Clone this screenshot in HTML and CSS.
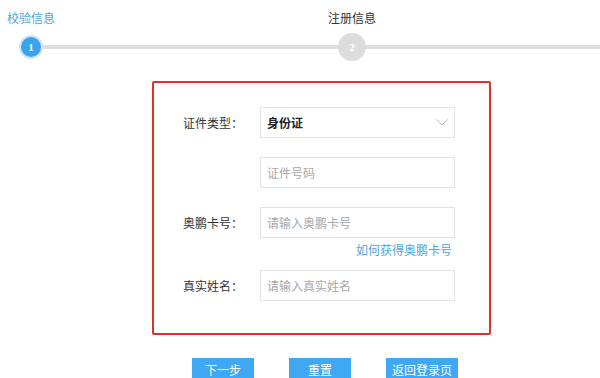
FILE: index.html
```html
<!DOCTYPE html>
<html lang="zh-CN">
<head>
<meta charset="utf-8">
<title>注册</title>
<link rel="stylesheet" href="styles.css">
</head>
<body>
<div class="steps">
  <div class="step active">
    <div class="step-label">校验信息</div>
    <div class="step-dot"><span class="dot">1</span></div>
  </div>
  <div class="step">
    <div class="step-label">注册信息</div>
    <div class="step-dot"><span class="dot">2</span></div>
  </div>
</div>

<div class="panel">
  <div class="row">
    <label class="label">证件类型：</label>
    <div class="field select">
      <span class="value">身份证</span>
      <svg class="chev" width="12" height="7" viewBox="0 0 12 7"><path d="M0.5 0.5 L6 6 L11.5 0.5" fill="none" stroke="#b5b5b5" stroke-width="1"/></svg>
    </div>
  </div>
  <div class="row">
    <span class="label"></span>
    <div class="field"><span class="ph">证件号码</span></div>
  </div>
  <div class="row tight">
    <label class="label">奥鹏卡号：</label>
    <div class="field"><span class="ph">请输入奥鹏卡号</span></div>
  </div>
  <div class="hint"><a class="link">如何获得奥鹏卡号</a></div>
  <div class="row last">
    <label class="label">真实姓名：</label>
    <div class="field"><span class="ph">请输入真实姓名</span></div>
  </div>
</div>

<div class="actions">
  <button class="btn">下一步</button>
  <button class="btn">重置</button>
  <button class="btn wide">返回登录页</button>
</div>
</body>
</html>
```

FILE: styles.css
```css
* { box-sizing: border-box; }
body {
  margin: 0;
  background: #fff;
  font-family: "Noto Sans CJK SC", "Liberation Sans", sans-serif;
  font-size: 12px;
  color: #333;
  width: 600px;
  height: 378px;
  overflow: hidden;
}

.steps {
  position: relative;
  display: flex;
  gap: 259px;
  padding-top: 10px;
  height: 81px;
}
.steps::before {
  content: "";
  position: absolute;
  left: 31px;
  right: 0;
  top: 45px;
  height: 4px;
  background: #dedede;
}
.step {
  position: relative;
  width: 62px;
  display: flex;
  flex-direction: column;
  align-items: center;
}
.step-label {
  line-height: 16px;
  font-size: 12px;
  color: #333;
  white-space: nowrap;
}
.step.active .step-label { color: #4ba6df; }
.step-dot {
  margin-top: 7px;
  height: 28px;
  display: flex;
  align-items: center;
  justify-content: center;
}
.dot {
  width: 28px;
  height: 28px;
  border-radius: 50%;
  background: #dcdcdc;
  color: #fff;
  font-family: "Liberation Serif", serif;
  font-weight: bold;
  font-size: 11px;
  display: flex;
  align-items: center;
  justify-content: center;
}
.step.active .dot {
  width: 24px;
  height: 24px;
  background: #3aa3ee;
  border: 2px solid #d3e5f4;
}

.panel {
  margin-left: 152px;
  width: 339px;
  height: 254px;
  border: 2px solid #df3029;
  border-radius: 2px;
  padding: 24px 34px 0 29px;
}
.row {
  display: flex;
  align-items: center;
  height: 31px;
  margin-bottom: 19px;
}
.row.tight { margin-bottom: 0; }
.label {
  width: 77px;
  flex: none;
  color: #333;
  font-size: 12px;
}
.field {
  width: 195px;
  height: 31px;
  border: 1px solid #e3e3e3;
  display: flex;
  align-items: center;
  padding-left: 6px;
  padding-right: 6px;
}
.select .value {
  flex: 1;
  color: #222;
  font-weight: bold;
  font-size: 12px;
}
.chev { margin-right: 0; }
.ph { color: #a8a8a8; font-size: 12px; }
.hint {
  margin-top: 2px;
  height: 30px;
  line-height: 20px;
  text-align: right;
  padding-right: 3px;
}
.link { color: #4ba6df; font-size: 12px; }

.actions {
  display: flex;
  gap: 35px;
  padding-left: 192px;
  margin-top: 23px;
}
.btn {
  width: 62px;
  height: 24px;
  border: none;
  border-radius: 0;
  background: #3ea8f4;
  color: #fff;
  font-family: "Noto Sans CJK SC", "Liberation Sans", sans-serif;
  font-size: 12px;
  line-height: 24px;
  padding: 0;
}
.btn.wide { width: 72px; }
```
